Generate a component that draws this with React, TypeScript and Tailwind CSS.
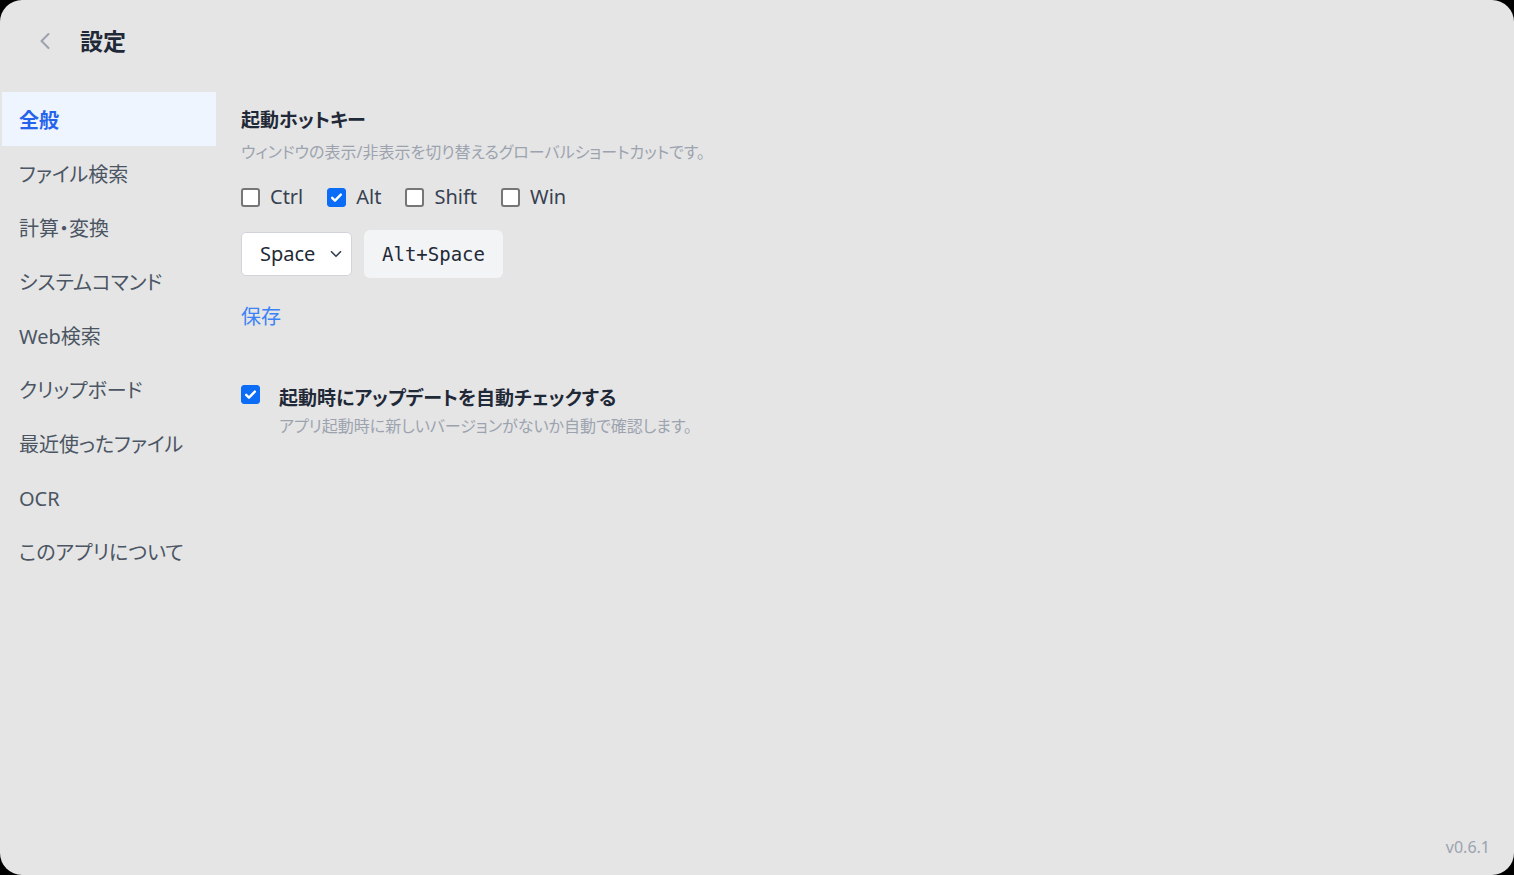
import { useState } from "react";
import { ChevronLeft, ChevronDown } from "lucide-react";
import clsx from "clsx";

const NAV_ITEMS = [
  "全般",
  "ファイル検索",
  "計算・変換",
  "システムコマンド",
  "Web検索",
  "クリップボード",
  "最近使ったファイル",
  "OCR",
  "このアプリについて",
];

const MODIFIERS = ["Ctrl", "Alt", "Shift", "Win"];

function Check({ checked, onChange }: { checked: boolean; onChange: () => void }) {
  return (
    <button
      type="button"
      onClick={onChange}
      className={clsx(
        "w-[19px] h-[19px] rounded-[3px] flex items-center justify-center flex-shrink-0",
        checked ? "bg-[#0b6cf5] border border-[#0b6cf5]" : "bg-white border-2 border-[#767676]"
      )}
    >
      {checked && (
        <svg width="13" height="13" viewBox="0 0 12 12" fill="none">
          <path d="M2 6.3l2.6 2.6L10 3.3" stroke="white" strokeWidth="2.2" strokeLinecap="round" strokeLinejoin="round" />
        </svg>
      )}
    </button>
  );
}

export default function App() {
  const [active, setActive] = useState(0);
  const [mods, setMods] = useState<Record<string, boolean>>({ Ctrl: false, Alt: true, Shift: false, Win: false });
  const [autoUpdate, setAutoUpdate] = useState(true);

  const combo = [...MODIFIERS.filter((m) => mods[m]), "Space"].join("+");

  return (
    <div
      className="h-screen bg-black [font-feature-settings:'palt']"
      style={{ fontFamily: '"Noto Sans", "Noto Sans CJK JP", sans-serif' }}
    >
      <div className="h-full rounded-[22px] bg-[#e5e5e5] flex flex-col relative overflow-hidden">
        {/* Header */}
        <header className="flex items-center h-[82px] pl-[31px]">
          <button className="text-[#9ca3af]">
            <ChevronLeft size={28} strokeWidth={1.8} />
          </button>
          <h1 className="ml-[21px] text-[23px] font-bold text-[#1f2937] leading-none">設定</h1>
        </header>

        <div className="flex flex-1 pt-[10px]">
          {/* Sidebar */}
          <nav className="w-[216px] pl-[2px] flex flex-col">
            {NAV_ITEMS.map((label, i) => (
              <button
                key={label}
                onClick={() => setActive(i)}
                className={clsx(
                  "h-[54px] text-left pl-[17px] pt-[4px] text-[20px]",
                  i === active ? "bg-[#eef5ff] text-[#2563eb] font-bold" : "text-[#4b5563]"
                )}
              >
                {label}
              </button>
            ))}
          </nav>

          {/* Content */}
          <main className="flex-1 pl-[25px] pt-[14px]">
            <h2 className="text-[19px] font-bold text-[#1f2937] leading-[28px]">起動ホットキー</h2>
            <p className="text-[16px] text-[#9ca3af] leading-[22px] mt-[7px]">
              ウィンドウの表示/非表示を切り替えるグローバルショートカットです。
            </p>

            <div className="flex items-center gap-[24px] mt-[24px]">
              {MODIFIERS.map((m) => (
                <label key={m} className="flex items-center gap-[10px] text-[20px] text-[#374151] leading-none">
                  <Check checked={mods[m]} onChange={() => setMods({ ...mods, [m]: !mods[m] })} />
                  {m}
                </label>
              ))}
            </div>

            <div className="flex items-center gap-[12px] mt-[23px]">
              <div className="w-[111px] h-[44px] bg-white border border-[#d1d5db] rounded-[5px] flex items-center justify-between pl-[18px] pr-[6px] text-[20px] text-[#1f2937]">
                <span>Space</span>
                <ChevronDown size={18} strokeWidth={2.2} className="text-[#374151]" />
              </div>
              <div
                className="h-[48px] px-[18px] bg-[#f3f4f6] rounded-[6px] flex items-center text-[19px] text-[#1f2937]"
                style={{ fontFamily: '"DejaVu Sans Mono", monospace' }}
              >
                {combo}
              </div>
            </div>

            <button className="mt-[24px] text-[20px] text-[#3b82f6] leading-[30px]">保存</button>

            <div className="flex items-start gap-[19px] mt-[51px]">
              <div className="pt-[2px]">
                <Check checked={autoUpdate} onChange={() => setAutoUpdate(!autoUpdate)} />
              </div>
              <div>
                <p className="text-[19px] font-bold text-[#1f2937] leading-[28px] pt-[1px]">起動時にアップデートを自動チェックする</p>
                <p className="text-[16px] text-[#9ca3af] leading-[24px] mt-[2px]">
                  アプリ起動時に新しいバージョンがないか自動で確認します。
                </p>
              </div>
            </div>
          </main>
        </div>

        <span className="absolute right-[24px] bottom-[16px] text-[16px] text-[#9ca3af]">v0.6.1</span>
      </div>
    </div>
  );
}
